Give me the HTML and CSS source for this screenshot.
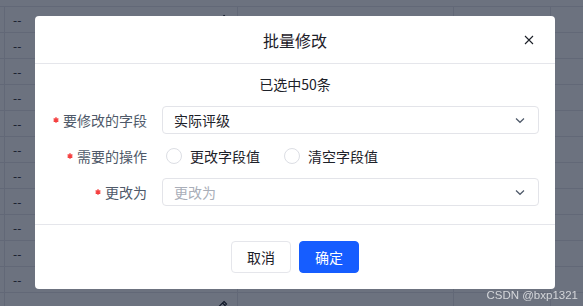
FILE: index.html
```html
<!DOCTYPE html>
<html lang="zh-CN">
<head>
<meta charset="utf-8">
<title>批量修改</title>
<link rel="stylesheet" href="styles.css">
</head>
<body>
<div class="page">
  <div class="table">
    <div class="row"><div class="edge"></div><div class="cell c1"><span>--</span><svg class="pen" viewBox="0 0 12 12"><path d="M8 1.5l2.5 2.5-6.5 6.5H1.5V8z M6.5 3l2.5 2.5"/></svg></div><div class="cell c2"></div><div class="cell c3"></div><div class="cell c4"></div></div>
    <div class="row"><div class="edge"></div><div class="cell c1"><span>--</span><svg class="pen" viewBox="0 0 12 12"><path d="M8 1.5l2.5 2.5-6.5 6.5H1.5V8z M6.5 3l2.5 2.5"/></svg></div><div class="cell c2"></div><div class="cell c3"></div><div class="cell c4"></div></div>
    <div class="row"><div class="edge"></div><div class="cell c1"><span>--</span><svg class="pen" viewBox="0 0 12 12"><path d="M8 1.5l2.5 2.5-6.5 6.5H1.5V8z M6.5 3l2.5 2.5"/></svg></div><div class="cell c2"></div><div class="cell c3"></div><div class="cell c4"></div></div>
    <div class="row"><div class="edge"></div><div class="cell c1"><span>--</span><svg class="pen" viewBox="0 0 12 12"><path d="M8 1.5l2.5 2.5-6.5 6.5H1.5V8z M6.5 3l2.5 2.5"/></svg></div><div class="cell c2"></div><div class="cell c3"></div><div class="cell c4"></div></div>
    <div class="row"><div class="edge"></div><div class="cell c1"><span>--</span><svg class="pen" viewBox="0 0 12 12"><path d="M8 1.5l2.5 2.5-6.5 6.5H1.5V8z M6.5 3l2.5 2.5"/></svg></div><div class="cell c2"></div><div class="cell c3"></div><div class="cell c4"></div></div>
    <div class="row"><div class="edge"></div><div class="cell c1"><span>--</span><svg class="pen" viewBox="0 0 12 12"><path d="M8 1.5l2.5 2.5-6.5 6.5H1.5V8z M6.5 3l2.5 2.5"/></svg></div><div class="cell c2"></div><div class="cell c3"></div><div class="cell c4"></div></div>
    <div class="row"><div class="edge"></div><div class="cell c1"><span>--</span><svg class="pen" viewBox="0 0 12 12"><path d="M8 1.5l2.5 2.5-6.5 6.5H1.5V8z M6.5 3l2.5 2.5"/></svg></div><div class="cell c2"></div><div class="cell c3"></div><div class="cell c4"></div></div>
    <div class="row"><div class="edge"></div><div class="cell c1"><span>--</span><svg class="pen" viewBox="0 0 12 12"><path d="M8 1.5l2.5 2.5-6.5 6.5H1.5V8z M6.5 3l2.5 2.5"/></svg></div><div class="cell c2"></div><div class="cell c3"></div><div class="cell c4"></div></div>
    <div class="row"><div class="edge"></div><div class="cell c1"><span>--</span><svg class="pen" viewBox="0 0 12 12"><path d="M8 1.5l2.5 2.5-6.5 6.5H1.5V8z M6.5 3l2.5 2.5"/></svg></div><div class="cell c2"></div><div class="cell c3"></div><div class="cell c4"></div></div>
    <div class="row"><div class="edge"></div><div class="cell c1"><span>--</span><svg class="pen" viewBox="0 0 12 12"><path d="M8 1.5l2.5 2.5-6.5 6.5H1.5V8z M6.5 3l2.5 2.5"/></svg></div><div class="cell c2"></div><div class="cell c3"></div><div class="cell c4"></div></div>
    <div class="row"><div class="edge"></div><div class="cell c1"><span>--</span><svg class="pen" viewBox="0 0 12 12"><path d="M8 1.5l2.5 2.5-6.5 6.5H1.5V8z M6.5 3l2.5 2.5"/></svg></div><div class="cell c2"><span class="val">11</span></div><div class="cell c3"><span class="val">1</span></div><div class="cell c4"></div></div>
    <div class="row"><div class="edge"></div><div class="cell c1"><span>--</span><svg class="pen" viewBox="0 0 12 12"><path d="M8 1.5l2.5 2.5-6.5 6.5H1.5V8z M6.5 3l2.5 2.5"/></svg></div><div class="cell c2"></div><div class="cell c3"></div><div class="cell c4"></div></div>
  </div>
</div>

<div class="mask">
  <div class="dialog">
    <div class="dialog-header">
      <span></span>
      <div class="dialog-title">批量修改</div>
      <button class="close" type="button" aria-label="关闭">
        <svg viewBox="0 0 12 12" width="12" height="12"><path d="M2 2L10 10M10 2L2 10"/></svg>
      </button>
    </div>
    <div class="dialog-body">
      <div class="summary">已选中50条</div>
      <div class="form">
        <div class="item">
          <div class="label"><svg class="star" viewBox="0 0 6 6"><path d="M3 0.3V5.7M0.6 1.6L5.4 4.4M5.4 1.6L0.6 4.4"/></svg>要修改的字段</div>
          <div class="select"><span>实际评级</span><svg class="arrow" viewBox="0 0 12 12"><path d="M2 4.5L6 8.3L10 4.5"/></svg></div>
        </div>
        <div class="item">
          <div class="label"><svg class="star" viewBox="0 0 6 6"><path d="M3 0.3V5.7M0.6 1.6L5.4 4.4M5.4 1.6L0.6 4.4"/></svg>需要的操作</div>
          <div class="radios">
            <label class="radio"><span class="circle"></span>更改字段值</label>
            <label class="radio"><span class="circle"></span>清空字段值</label>
          </div>
        </div>
        <div class="item">
          <div class="label"><svg class="star" viewBox="0 0 6 6"><path d="M3 0.3V5.7M0.6 1.6L5.4 4.4M5.4 1.6L0.6 4.4"/></svg>更改为</div>
          <div class="select"><span class="placeholder">更改为</span><svg class="arrow" viewBox="0 0 12 12"><path d="M2 4.5L6 8.3L10 4.5"/></svg></div>
        </div>
      </div>
    </div>
    <div class="dialog-footer">
      <button class="btn btn-cancel" type="button">取消</button>
      <button class="btn btn-ok" type="button">确定</button>
    </div>
  </div>
</div>

<div class="watermark">CSDN @bxp1321</div>
</body>
</html>
```

FILE: styles.css
```css
* { box-sizing: border-box; }

html, body {
  margin: 0;
  height: 100%;
  overflow: hidden;
}

body {
  font-family: "Noto Sans CJK SC", "Liberation Sans", sans-serif;
  background: #fff;
  color: #1d2129;
}

.page { padding-top: 6px; }

.table { border-top: 1px solid #e5e6eb; }

.row {
  display: grid;
  grid-template-columns: 4px 233px 216px 97px 1fr;
  height: 26px;
  border-bottom: 1px solid #e5e6eb;
}

.cell {
  border-left: 1px solid #e5e6eb;
  display: flex;
  align-items: center;
  font-size: 12px;
  line-height: 16px;
}

.c1 {
  justify-content: space-between;
  padding: 0 9px 0 8px;
}

.c2, .c3 { justify-content: center; }

.val { font-family: "Liberation Sans", sans-serif; font-size: 13px; }

.pen {
  width: 12px;
  height: 12px;
  fill: none;
  stroke: #1d2129;
  stroke-width: 1.2;
}

.mask {
  position: fixed;
  inset: 0;
  background: rgba(10, 20, 42, 0.6);
  display: flex;
  justify-content: center;
  align-items: flex-start;
  padding: 16px 0 0 7px;
}

.dialog {
  width: 520px;
  background: #fff;
  border-radius: 4px;
}

.dialog-header {
  display: grid;
  grid-template-columns: 1fr auto 1fr;
  align-items: center;
  height: 48px;
  padding: 0 20px;
  border-bottom: 1px solid #e5e6eb;
}

.dialog-title {
  font-size: 16px;
  line-height: 24px;
  color: #1d2129;
}

.close {
  justify-self: end;
  width: 12px;
  height: 12px;
  padding: 0;
  border: 0;
  background: none;
  display: flex;
}

.close svg {
  fill: none;
  stroke: #1d2129;
  stroke-width: 1.1;
}

.dialog-body { padding: 9px 16px 18px; }

.summary {
  text-align: center;
  font-size: 14px;
  line-height: 22px;
  margin-bottom: 11px;
}

.form {
  display: flex;
  flex-direction: column;
  gap: 8px;
}

.item {
  display: grid;
  grid-template-columns: 96px 1fr;
  column-gap: 15px;
  align-items: center;
  height: 28px;
}

.label {
  display: flex;
  justify-content: flex-end;
  align-items: center;
  font-size: 14px;
  line-height: 20px;
  color: #4e5969;
}

.star {
  width: 6px;
  height: 6px;
  margin-right: 4px;
  fill: none;
  stroke: #f53f3f;
  stroke-width: 1.4;
}

.select {
  height: 28px;
  border: 1px solid #e3e4e9;
  border-radius: 4px;
  padding: 0 12px 0 11px;
  display: flex;
  align-items: center;
  justify-content: space-between;
  font-size: 14px;
  line-height: 20px;
  color: #1d2129;
}

.placeholder { color: #a9aeb8; }

.arrow {
  width: 12px;
  height: 12px;
  fill: none;
  stroke: #4e5969;
  stroke-width: 1.2;
}

.radios {
  display: flex;
  align-items: center;
  padding-left: 4px;
}

.radio {
  display: flex;
  align-items: center;
  font-size: 14px;
  line-height: 20px;
  color: #1d2129;
}

.radio + .radio { margin-left: 24px; }

.circle {
  width: 16px;
  height: 16px;
  border: 1px solid #dcdee4;
  border-radius: 50%;
  margin-right: 8px;
}

.dialog-footer {
  border-top: 1px solid #e5e6eb;
  padding: 16px;
  display: flex;
  justify-content: center;
  gap: 8px;
}

.btn {
  width: 60px;
  height: 32px;
  border-radius: 4px;
  font-family: inherit;
  font-size: 14px;
  padding: 0;
}

.btn-cancel {
  background: #fff;
  border: 1px solid #e5e6eb;
  color: #1d2129;
}

.btn-ok {
  background: #165dff;
  border: 1px solid #165dff;
  color: #fff;
}

.watermark {
  position: fixed;
  right: 5px;
  bottom: 4px;
  font-family: "Liberation Sans", sans-serif;
  font-size: 11.5px;
  line-height: 13px;
  color: #d4d6da;
}
```
